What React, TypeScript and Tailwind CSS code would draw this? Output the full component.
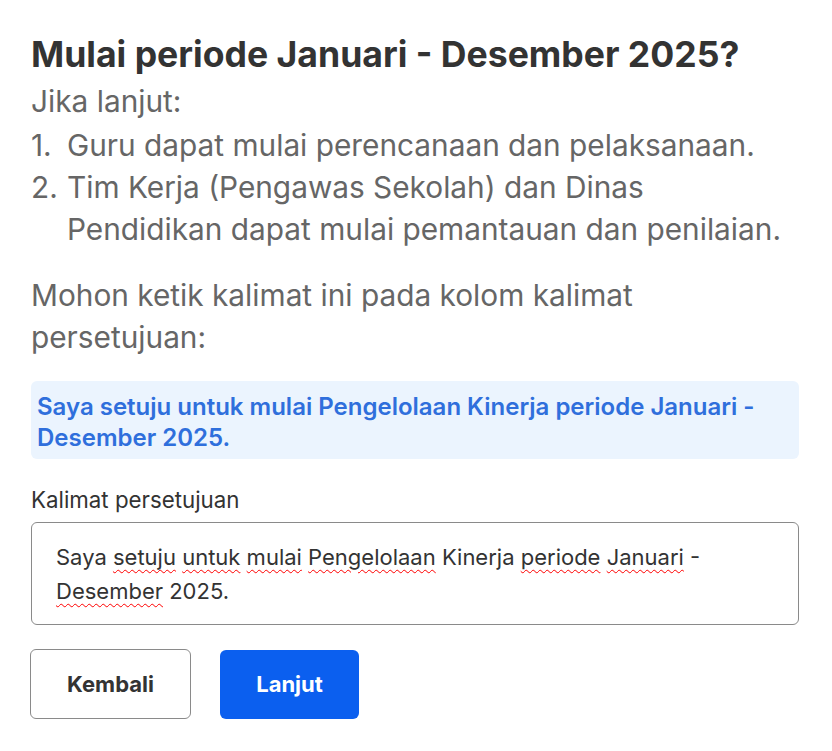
import React from 'react'

const words: [string, boolean][] = [
  ['Saya', false],
  ['setuju', true],
  ['untuk', true],
  ['mulai', true],
  ['Pengelolaan', true],
  ['Kinerja', false],
  ['periode', true],
  ['Januari', true],
  ['-', false],
  ['Desember', true],
  ['2025.', false],
]

export default function App() {
  return (
    <div className="min-h-screen bg-white pl-[31px] pr-[33px] pt-[30px] font-['Inter',sans-serif]">
      <h1 className="text-[35.6px] font-bold leading-[50px] text-[#333333]">
        Mulai periode Januari - Desember 2025?
      </h1>
      <div className="text-[29.8px] leading-[42px] text-[#666666]">
        <p className="mb-[2px]">Jika lanjut:</p>
        <ol>
          <li className="flex">
            <span className="w-[36px] shrink-0">1.</span>
            <span>Guru dapat mulai perencanaan dan pelaksanaan.</span>
          </li>
          <li className="flex">
            <span className="w-[36px] shrink-0">2.</span>
            <span>Tim Kerja (Pengawas Sekolah) dan Dinas Pendidikan dapat mulai pemantauan dan penilaian.</span>
          </li>
        </ol>
        <p className="mt-[24px] pr-[148px]">Mohon ketik kalimat ini pada kolom kalimat persetujuan:</p>
      </div>

      <div className="mt-[23px] rounded-md bg-[#ebf4fe] px-[6px] pt-[10px] pb-[6px] text-[24px] font-semibold leading-[31px] text-[#2f6fdc]">
        Saya setuju untuk mulai Pengelolaan Kinerja periode Januari - Desember 2025.
      </div>

      <label className="mt-[27px] block text-[22.3px] leading-[28px] text-[#333333]">Kalimat persetujuan</label>
      <div className="mt-[8px] h-[103px] rounded-md border border-[#8a8a8a] px-[24px] pt-[17px] text-[22px] leading-[34px] text-[#333333]">
        {words.map(([w, bad], i) => (
          <React.Fragment key={i}>
            <span className={bad ? 'underline decoration-wavy decoration-[#ff0000] decoration-1 underline-offset-[4px]' : ''}>{w}</span>
            {i < words.length - 1 ? ' ' : null}
          </React.Fragment>
        ))}
      </div>

      <div className="-ml-px mt-[24px] flex items-end gap-[29px]">
        <button type="button" className="h-[70px] w-[161px] rounded-md border border-[#8a8a8a] bg-white text-[22px] font-bold text-[#333333]">
          Kembali
        </button>
        <button type="button" className="h-[69px] w-[139px] rounded-md bg-[#0b5fef] text-[22px] font-bold text-white">
          Lanjut
        </button>
      </div>
    </div>
  )
}
